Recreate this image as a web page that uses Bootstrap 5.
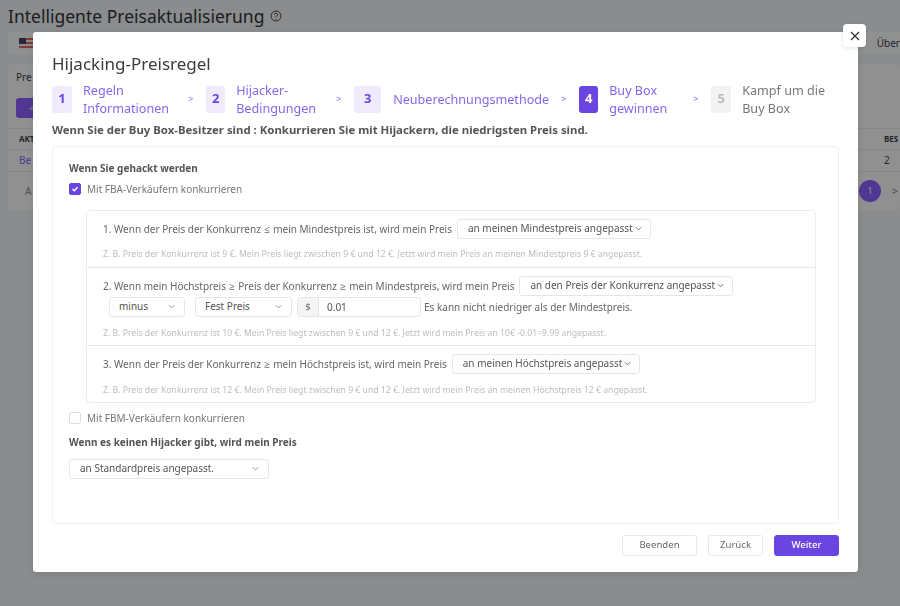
<!DOCTYPE html>
<html lang="de">
<head>
  <meta charset="UTF-8">
  <title>Hijacking-Preisregel</title>
  <link href="https://cdn.jsdelivr.net/npm/bootstrap@5.3.0/dist/css/bootstrap.min.css" rel="stylesheet">
  <style>
    html, body { height: 100%; overflow: hidden; }
    body { font-family: "Noto Sans", "Open Sans", sans-serif; background: #eef2f4; color: #555; font-size: 10px; }

    /* page behind the dialog */
    .bg-page { padding: 3px 0 0 8px; color: #3c4145; }
    .bg-title { font-size: 17.5px; line-height: 26px; color: #333; }
    .bg-help { width: 12px; height: 12px; margin-left: 6px; }
    .bg-filter { height: 22px; margin-top: 3px; padding: 0 0 0 11px; background: #f6f8f9; font-size: 10px; }
    .flag { width: 14px; height: 11px; background: repeating-linear-gradient(#d66 0 2px, #eee 2px 4px); position: relative; }
    .flag::before { content: ""; position: absolute; left: 0; top: 0; width: 7px; height: 6px; background: #446; }
    .bg-card { margin-top: 10px; height: 146px; background: #f8f9fa; border-radius: 4px; font-size: 10px; }
    .bg-card-label { padding: 5px 8px 0; height: 34px; line-height: 16px; }
    .bg-add { width: 24px; height: 20px; margin-left: 8px; background: #8a60ff; border-radius: 3px; color: #ddd; line-height: 20px; padding-left: 13px; }
    .bg-head { margin-top: 10px; height: 22px; border-top: 1px solid #e3e6e8; border-bottom: 1px solid #e3e6e8; padding: 0 0 0 11px; font-size: 8px; font-weight: 700; }
    .bg-row { height: 22px; padding: 0 0 0 11px; border-bottom: 1px solid #e3e6e8; }
    .bg-link { color: #8a60ff; }
    .bg-right-cell { width: 16px; }
    .bg-pager { height: 38px; padding: 0 0 0 17px; color: #888; }
    .bg-page-no { width: 22px; height: 22px; border-radius: 50%; background: #8a60ff; color: #fff; font-size: 9px; }
    .bg-next { width: 8px; margin-left: 11px; color: #777; }
    .bg-backdrop { position: fixed; inset: 0; background: rgba(0, 0, 0, .42); }

    /* dialog */
    .rule-modal { position: fixed; left: 33px; top: 32px; width: 825px; height: 540px; background: #fff; border-radius: 3px; padding: 20px 19px 0; display: flex; flex-direction: column; box-shadow: 0 2px 8px rgba(0,0,0,.12); }
    .rule-close { position: absolute; right: -8px; top: -8px; width: 23px; height: 23px; background: #fff; border: 0; border-radius: 4px; padding: 0; box-shadow: 0 1px 4px rgba(0,0,0,.12); }
    .rule-title { font-size: 17px; line-height: 22px; font-weight: 400; color: #3b3b3b; margin: 1px 0 0; }

    .steps { margin-top: 6px; height: 36px; }
    .step-no { height: 27px; width: 20px; background: #efebfd; color: #6a45e0; border-radius: 3px; font-size: 13px; font-weight: 700; flex: none; }
    .step-no.narrow { width: 19px; }
    .step-no.wide { width: 27px; }
    .step-no.now { background: #6a45e0; color: #fff; }
    .step-no.off { background: #f3f3f3; color: #bbb; }
    .step-text { font-size: 12.6px; line-height: 18px; color: #8567ea; margin: 2px 0 0 11px; }
    .step-text.off { color: #777; }
    .step-text.roomy { min-width: 65px; }
    .step-text.far { margin-left: 12px; }
    .step-arrow { color: #8567ea; font-size: 9px; flex: none; width: 6px; margin: 0 12px 0 19px; }
    .step-arrow.loose { margin-left: 20px; }
    .step-arrow.tight { margin-left: 12px; }
    .rule-lead { font-size: 11.4px; line-height: 15px; font-weight: 700; color: #555; margin: 5px 0 0; white-space: nowrap; }

    .rule-box { margin-top: 9px; border: 1px solid #f0f0f0; border-radius: 4px; height: 378px; padding: 13px 16px; }
    .box-head { font-size: 10px; line-height: 16px; font-weight: 700; color: #555; }
    .chk { width: 12px; height: 12px; border-radius: 2px; border: 1px solid #ddd; background: #fff; flex: none; }
    .chk.on { background: #6a45e0; border-color: #6a45e0; }
    .chk-row { font-size: 10px; line-height: 14px; color: #777; gap: 6px; }
    .chk-first { margin-top: 6px; }

    .cond-list { margin: 14px 6px 0 17px; border: 1px solid #ececec; border-radius: 4px; }
    .cond { padding: 8px 16px 0; border-bottom: 1px solid #e6e6e6; color: #666; font-size: 10px; }
    .cond:last-child { border-bottom: 0; }
    .cond-line { min-height: 20px; white-space: nowrap; }
    .cond-line + .cond-line { margin-top: 1px; }
    .cmp { margin: 0 .7px; }
    .cond-hint { font-size: 8.68px; line-height: 12px; color: #bdbdbd; margin-top: 9px; padding-bottom: 7px; white-space: nowrap; }
    .cond + .cond .cond-hint { margin-top: 10px; padding-bottom: 6px; }
    .pick { height: 20px; background: #fff; border: 1px solid #e6e6e6; border-radius: 3px; font-size: 10px; color: #555; padding: 0 8px 2px 10px; margin-left: 5px; white-space: nowrap; }
    .pick svg, .pick-wide svg { width: 7px; height: 5px; margin-left: 2px; flex: none; }
    .pick-wide { height: 20px; border: 1px solid #e6e6e6; border-radius: 3px; background: #fff; padding: 0 9px 2px 9px; color: #555; font-size: 10px; justify-content: space-between; }
    .pick-a { width: 76px; margin-left: 6px; }
    .pick-b { width: 97px; margin-left: 10px; }
    .pick-c { width: 200px; margin-top: 9px; padding-left: 10px; }
    .money { width: 124px; height: 20px; margin: 0 3px 0 5px; border: 1px solid #e6e6e6; border-radius: 3px; overflow: hidden; }
    .money span { width: 21px; background: #f5f5f5; border-right: 1px solid #e6e6e6; font-size: 9px; }
    .money div { padding-left: 8px; font-size: 10px; color: #555; }
    .no-hijacker { margin-top: 9px; }

    .rule-foot { height: 48px; padding-bottom: 5px; }
    .foot-btn { height: 21px; border: 1px solid #e8e8e8; border-radius: 3px; background: #fff; color: #666; font-size: 9.6px; padding: 0; margin-left: 11px; }
    .foot-quit { width: 75px; }
    .foot-back { width: 55px; }
    .foot-next { width: 65px; background: #6a45e0; border-color: #6a45e0; color: #fff; font-weight: 500; }
  </style>
</head>
<body>

  <div class="bg-page">
    <div class="d-flex align-items-center bg-title">Intelligente Preisaktualisierung
      <svg class="bg-help" viewBox="0 0 12 12" fill="none" stroke="#444"><circle cx="6" cy="6" r="5"/><path d="M4.5 4.8a1.5 1.5 0 1 1 2.2 1.3c-.5.3-.7.5-.7 1.1M6 8.5v.8"/></svg>
    </div>
    <div class="d-flex align-items-center justify-content-between bg-filter">
      <div class="flag"></div>
      <div>Über</div>
    </div>
    <div class="bg-card">
      <div class="bg-card-label">Pre</div>
      <div class="bg-add">+</div>
      <div class="d-flex align-items-center justify-content-between bg-head"><span>AKT</span><span class="bg-right-cell">BES</span></div>
      <div class="d-flex align-items-center justify-content-between bg-row"><span class="bg-link">Be</span><span class="bg-right-cell">2</span></div>
      <div class="d-flex align-items-center justify-content-between bg-pager">
        <span>A</span>
        <div class="d-flex align-items-center"><div class="d-flex align-items-center justify-content-center bg-page-no">1</div><span class="bg-next">&gt;</span></div>
      </div>
    </div>
  </div>
  <div class="bg-backdrop"></div>

  <div class="rule-modal">
    <button class="rule-close d-flex align-items-center justify-content-center" type="button" aria-label="Schließen">
      <svg width="10" height="10" viewBox="0 0 10 10" stroke="#333" stroke-width="1.3"><path d="M1 1l8 8M9 1L1 9"/></svg>
    </button>
    <h5 class="rule-title">Hijacking-Preisregel</h5>

    <div class="d-flex align-items-center steps">
      <div class="d-flex align-items-center"><div class="d-flex align-items-center justify-content-center step-no">1</div><div class="step-text">Regeln<br>Informationen</div></div>
      <span class="step-arrow">&gt;</span>
      <div class="d-flex align-items-center"><div class="d-flex align-items-center justify-content-center step-no narrow">2</div><div class="step-text">Hijacker-<br>Bedingungen</div></div>
      <span class="step-arrow loose">&gt;</span>
      <div class="d-flex align-items-center"><div class="d-flex align-items-center justify-content-center step-no wide">3</div><div class="step-text far">Neuberechnungsmethode</div></div>
      <span class="step-arrow tight">&gt;</span>
      <div class="d-flex align-items-center"><div class="d-flex align-items-center justify-content-center step-no narrow now">4</div><div class="step-text roomy">Buy Box<br>gewinnen</div></div>
      <span class="step-arrow">&gt;</span>
      <div class="d-flex align-items-center"><div class="d-flex align-items-center justify-content-center step-no off">5</div><div class="step-text off">Kampf um die<br>Buy Box</div></div>
    </div>

    <p class="rule-lead">Wenn Sie der Buy Box-Besitzer sind : Konkurrieren Sie mit Hijackern, die niedrigsten Preis sind.</p>

    <div class="rule-box">
      <div class="box-head">Wenn Sie gehackt werden</div>
      <div class="d-flex align-items-center chk-row chk-first">
        <span class="d-flex align-items-center justify-content-center chk on"><svg width="8" height="8" viewBox="0 0 8 8" fill="none" stroke="#fff" stroke-width="1.3"><path d="M1.5 4l1.8 1.8L6.6 2.3"/></svg></span>
        Mit FBA-Verkäufern konkurrieren
      </div>

      <div class="cond-list">
        <div class="cond">
          <div class="d-flex align-items-center cond-line"><span>1. Wenn der Preis der Konkurrenz <span class="cmp">≤</span> mein Mindestpreis ist, wird mein Preis</span>
            <div class="d-flex align-items-center pick">an meinen Mindestpreis angepasst <svg viewBox="0 0 8 5" fill="none" stroke="#666"><path d="M1 1l3 3 3-3"/></svg></div>
          </div>
          <div class="cond-hint">Z. B. Preis der Konkurrenz ist 9 €. Mein Preis liegt zwischen 9 € und 12 €. Jetzt wird mein Preis an meinen Mindestpreis 9 € angepasst.</div>
        </div>
        <div class="cond">
          <div class="d-flex align-items-center cond-line"><span>2. Wenn mein Höchstpreis <span class="cmp">≥</span> Preis der Konkurrenz <span class="cmp">≥</span> mein Mindestpreis, wird mein Preis</span>
            <div class="d-flex align-items-center pick">an den Preis der Konkurrenz angepasst <svg viewBox="0 0 8 5" fill="none" stroke="#666"><path d="M1 1l3 3 3-3"/></svg></div>
          </div>
          <div class="d-flex align-items-center cond-line">
            <div class="d-flex align-items-center pick-wide pick-a">minus <svg viewBox="0 0 8 5" fill="none" stroke="#888"><path d="M1 1l3 3 3-3"/></svg></div>
            <div class="d-flex align-items-center pick-wide pick-b">Fest Preis <svg viewBox="0 0 8 5" fill="none" stroke="#888"><path d="M1 1l3 3 3-3"/></svg></div>
            <div class="d-flex money"><span class="d-flex align-items-center justify-content-center">$</span><div class="d-flex align-items-center">0.01</div></div>
            Es kann nicht niedriger als der Mindestpreis.
          </div>
          <div class="cond-hint">Z. B. Preis der Konkurrenz ist 10 €. Mein Preis liegt zwischen 9 € und 12 €. Jetzt wird mein Preis an 10€ -0.01=9.99 angepasst.</div>
        </div>
        <div class="cond">
          <div class="d-flex align-items-center cond-line"><span>3. Wenn der Preis der Konkurrenz <span class="cmp">≥</span> mein Höchstpreis ist, wird mein Preis</span>
            <div class="d-flex align-items-center pick">an meinen Höchstpreis angepasst <svg viewBox="0 0 8 5" fill="none" stroke="#666"><path d="M1 1l3 3 3-3"/></svg></div>
          </div>
          <div class="cond-hint">Z. B. Preis der Konkurrenz ist 12 €. Mein Preis liegt zwischen 9 € und 12 €. Jetzt wird mein Preis an meinen Höchstpreis 12 € angepasst.</div>
        </div>
      </div>

      <div class="d-flex align-items-center chk-row mt-2"><span class="chk"></span>Mit FBM-Verkäufern konkurrieren</div>
      <div class="box-head no-hijacker">Wenn es keinen Hijacker gibt, wird mein Preis</div>
      <div class="d-flex align-items-center pick-wide pick-c">an Standardpreis angepasst. <svg viewBox="0 0 8 5" fill="none" stroke="#888"><path d="M1 1l3 3 3-3"/></svg></div>
    </div>

    <div class="d-flex align-items-center justify-content-end rule-foot">
      <button class="foot-btn foot-quit" type="button">Beenden</button>
      <button class="foot-btn foot-back" type="button">Zurück</button>
      <button class="foot-btn foot-next" type="button">Weiter</button>
    </div>
  </div>

</body>
</html>
